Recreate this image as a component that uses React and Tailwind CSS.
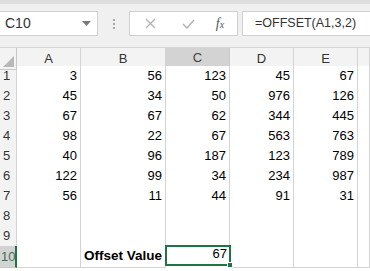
import React from 'react';

const data = [
  [3, 56, 123, 45, 67],
  [45, 34, 50, 976, 126],
  [67, 67, 62, 344, 445],
  [98, 22, 67, 563, 763],
  [40, 96, 187, 123, 789],
  [122, 99, 34, 234, 987],
  [56, 11, 44, 91, 31],
];

const cols = ['A', 'B', 'C', 'D', 'E', ''];
const cellFont = { fontFamily: '"Liberation Sans", Arial, sans-serif' };

const Toolbar = () => (
  <div className="h-[47px] bg-[#f0f0f0] border-t-[4px] border-[#dedede] relative">
    <div className="flex items-start pt-[7px]">
      {/* name box */}
      <div className="w-[98px] h-[25px] bg-white border border-[#d0d0d0] border-l-0 flex items-center justify-between pl-[5px] pr-[6px]">
        <span className="text-[14px] text-[#333]" style={cellFont}>C10</span>
        <svg width="9" height="5" viewBox="0 0 9 5">
          <path d="M0 0 L9 0 L4.5 5 Z" fill="#7a7a7a" />
        </svg>
      </div>
      {/* grip dots */}
      <div className="w-[31px] h-[25px] flex flex-col items-center justify-center gap-[2px]">
        <span className="w-[2px] h-[2px] bg-[#a8a8a8]" />
        <span className="w-[2px] h-[2px] bg-[#a8a8a8]" />
        <span className="w-[2px] h-[2px] bg-[#a8a8a8]" />
      </div>
      {/* cancel / enter / fx */}
      <div className="w-[109px] h-[25px] bg-white border border-[#d0d0d0] flex items-center">
        <div className="w-[38px] flex justify-center ml-[1px]">
          <svg width="11" height="11" viewBox="0 0 11 11">
            <path d="M1 1 L10 10 M10 1 L1 10" stroke="#b4b4b4" strokeWidth="1.4" />
          </svg>
        </div>
        <div className="w-[38px] flex justify-center">
          <svg width="13" height="10" viewBox="0 0 13 10">
            <path d="M1 5 L5 9 L12 1" stroke="#b4b4b4" strokeWidth="1.5" fill="none" />
          </svg>
        </div>
        <div className="flex-1 flex justify-center pr-[4px]">
          <span className="italic text-[14px] text-[#555]" style={{ fontFamily: '"Liberation Serif", serif' }}>
            f<span className="text-[10px]">x</span>
          </span>
        </div>
      </div>
      {/* formula input */}
      <div className="ml-[4px] flex-1 h-[25px] bg-white border border-[#d0d0d0] border-r-0 flex items-center pl-[12px]">
        <span className="text-[12.5px] text-[#333]" style={cellFont}>=OFFSET(A1,3,2)</span>
      </div>
    </div>
  </div>
);

const HeaderRow = () => (
  <div className="grid grid-cols-[17px_64px_85px_64px_64px_64px_1fr] h-[19px] bg-[#f3f3f3] border-t border-[#d4d4d4]">
    <div className="border-r border-b border-[#c8c8c8] relative overflow-hidden">
      <svg className="absolute right-[2px] bottom-[2px]" width="11" height="11" viewBox="0 0 11 11">
        <path d="M11 0 L11 11 L0 11 Z" fill="#b8b8b8" />
      </svg>
    </div>
    {cols.map((c, i) =>
      c === 'C' ? (
        <div key={i} className="bg-[#d3d3d3] border-r border-[#c8c8c8] border-b-2 border-b-[#217346] flex items-center justify-center text-[13px] text-[#444]" style={cellFont}>
          {c}
        </div>
      ) : (
        <div key={i} className="border-r border-b border-[#d4d4d4] flex items-center justify-center text-[13px] text-[#333]" style={cellFont}>
          {c}
        </div>
      )
    )}
  </div>
);

const Row = ({ n, values, children }) => (
  <div className="grid grid-cols-[17px_64px_85px_64px_64px_64px_1fr] h-[20px]">
    <div
      className={
        n === 10
          ? 'bg-[#d3d3d3] border-b border-[#c8c8c8] border-r-2 border-r-[#217346] flex items-end pb-[1px] pl-[1px] text-[13px] text-[#4a6a55]'
          : 'bg-[#f3f3f3] border-r border-b border-[#d4d4d4] flex items-end pb-[1px] pl-[3px] text-[13px] text-[#333]'
      }
      style={cellFont}
    >
      {n}
    </div>
    {children ||
      [0, 1, 2, 3, 4, 5].map((j) => (
        <div key={j} className="bg-white border-r border-b border-[#d4d4d4] flex items-end justify-end pr-[3px] pb-[1px] text-[13px] text-black" style={cellFont}>
          {values && values[j] !== undefined ? values[j] : ''}
        </div>
      ))}
  </div>
);

export default function App() {
  return (
    <div className="w-[370px] h-[271px] overflow-hidden bg-white">
      <Toolbar />
      <HeaderRow />
      {data.map((r, i) => (
        <Row key={i} n={i + 1} values={r} />
      ))}
      <Row n={8} />
      <Row n={9} />
      <Row n={10}>
        <div className="bg-white border-r border-b border-[#d4d4d4]" />
        <div className="bg-white border-r border-b border-[#d4d4d4] flex items-end justify-end pr-[3px] pb-[1px] text-[13.5px] font-bold text-black" style={cellFont}>
          Offset Value
        </div>
        <div className="relative bg-white -mt-[1px] -ml-[1px] h-[21px] w-[66px] border-2 border-[#217346] flex items-end justify-end pr-[2px] pb-[1px] text-[13px] text-black" style={cellFont}>
          67
          <span className="absolute -right-[4px] -bottom-[4px] w-[6px] h-[6px] bg-[#217346] border border-white" />
        </div>
        <div className="bg-white border-r border-b border-[#d4d4d4]" />
        <div className="bg-white border-r border-b border-[#d4d4d4]" />
        <div className="bg-white border-r border-b border-[#d4d4d4]" />
      </Row>
    </div>
  );
}
